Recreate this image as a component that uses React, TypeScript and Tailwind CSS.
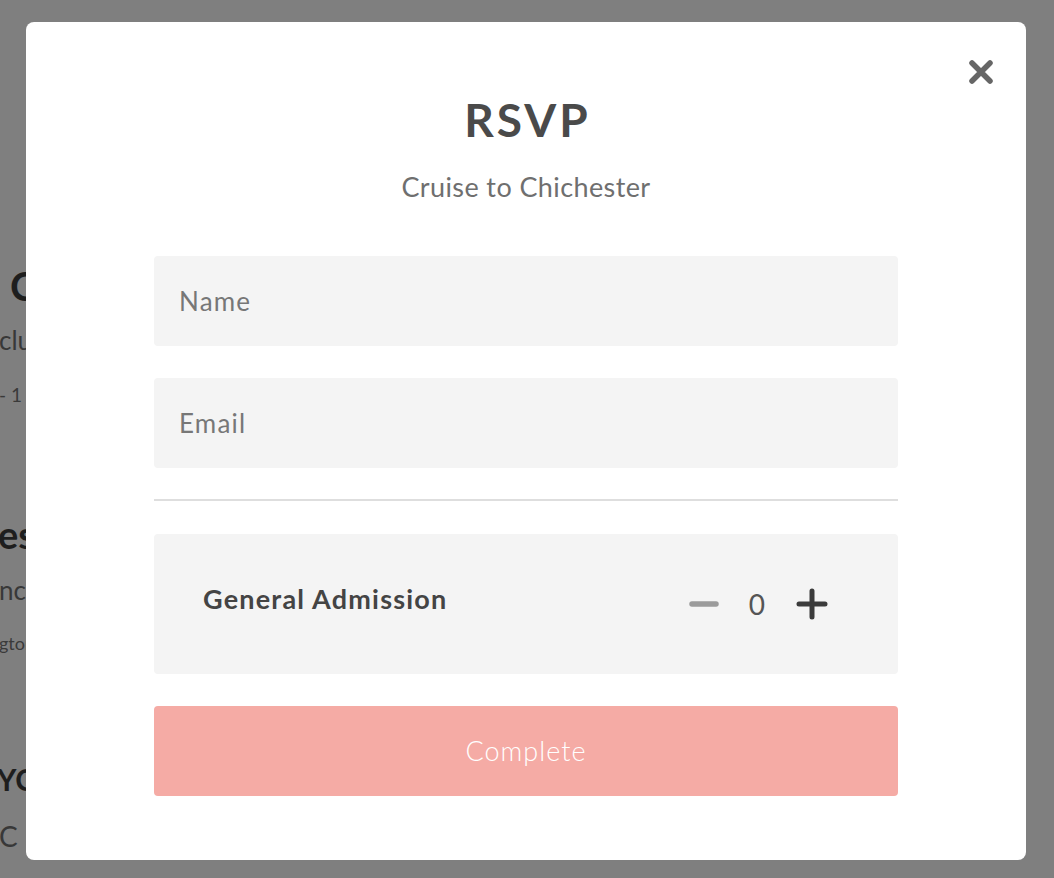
import React from "react";

function CloseIcon() {
  return (
    <svg width="26" height="26" viewBox="0 0 26 26" fill="none">
      <path d="M4 4 L22 22 M22 4 L4 22" stroke="#666666" strokeWidth="5.5" strokeLinecap="round" />
    </svg>
  );
}

function MinusIcon() {
  return (
    <svg width="30" height="8" viewBox="0 0 30 8" fill="none">
      <path d="M3 4 L27 4" stroke="#9b9b9b" strokeWidth="5.5" strokeLinecap="round" />
    </svg>
  );
}

function PlusIcon() {
  return (
    <svg width="32" height="32" viewBox="0 0 32 32" fill="none">
      <path d="M3 16 L29 16 M16 3 L16 29" stroke="#3b3b3b" strokeWidth="5" strokeLinecap="round" />
    </svg>
  );
}

export default function App() {
  return (
    <div className="relative w-[1054px] h-[878px] overflow-hidden bg-[#7f7f7f] font-['Lato',sans-serif]">
      {/* page behind the overlay */}
      <div className="flex flex-col whitespace-nowrap pt-[266px]">
        <div className="ml-[10px] text-[40px] leading-[40px] font-bold text-[#1e1e1e]">Cruise to Chichester</div>
        <div className="ml-[-1px] mt-[21px] text-[26px] leading-[26px] text-[#383838]">club members only</div>
        <div className="ml-[-1px] mt-[32px] text-[19px] leading-[19px] text-[#3a3a3a]">- 1 pm · Marina</div>
        <div className="ml-[-2px] mt-[111px] text-[38px] leading-[38px] font-bold text-[#1e1e1e]">es Week Regatta</div>
        <div className="ml-[-1px] mt-[24px] text-[26px] leading-[26px] text-[#383838]">nce a year</div>
        <div className="ml-[-1px] mt-[31px] text-[18px] leading-[18px] text-[#3a3a3a]">gton Harbour</div>
        <div className="ml-[-3px] mt-[112px] text-[30px] leading-[30px] font-bold text-[#1e1e1e]">YC Laying Up Supper</div>
        <div className="ml-[-1px] mt-[28px] text-[28px] leading-[28px] text-[#383838]">{"C\u2003Clubhouse"}</div>
        <div className="ml-[-1px] mt-[27px] text-[20px] leading-[20px] text-[#3a3a3a]">1000</div>
      </div>

      {/* modal */}
      <div className="absolute left-[26px] top-[22px] w-[1000px] h-[838px] rounded-[8px] bg-white">
        <button className="absolute right-[32px] top-[37px] flex items-center justify-center">
          <CloseIcon />
        </button>
        <div className="flex flex-col items-center pt-[70px]">
          <h1 className="pl-[3px] text-[46px] leading-[56px] font-bold tracking-[3px] text-[#4a4a4a]">RSVP</h1>
          <p className="mt-[23px] text-[27px] leading-[32px] tracking-[0.4px] text-[#6f6f6f]">Cruise to Chichester</p>
          <div className="mt-[53px] flex w-[744px] flex-col">
            <div className="flex h-[90px] items-center rounded-[4px] bg-[#f4f4f4] px-[25px] text-[26px] tracking-[1.2px] text-[#777777]">Name</div>
            <div className="mt-[32px] flex h-[90px] items-center rounded-[4px] bg-[#f4f4f4] px-[25px] text-[26px] tracking-[1.2px] text-[#777777]">Email</div>
            <div className="mt-[31px] h-[2px] bg-[#dedede]" />
            <div className="mt-[33px] flex h-[140px] items-center justify-between rounded-[4px] bg-[#f4f4f4] pl-[49px] pr-[70px]">
              <span className="pb-[10px] text-[27px] font-bold tracking-[1.2px] text-[#444444]">General Admission</span>
              <div className="flex items-center">
                <MinusIcon />
                <span className="ml-[30px] mr-[31px] text-[28px] leading-[32px] text-[#555555]">0</span>
                <PlusIcon />
              </div>
            </div>
            <button className="mt-[32px] flex h-[90px] items-center justify-center rounded-[4px] bg-[#f5aba5] text-[27px] font-light tracking-[1px] text-white">
              Complete
            </button>
          </div>
        </div>
      </div>
    </div>
  );
}
